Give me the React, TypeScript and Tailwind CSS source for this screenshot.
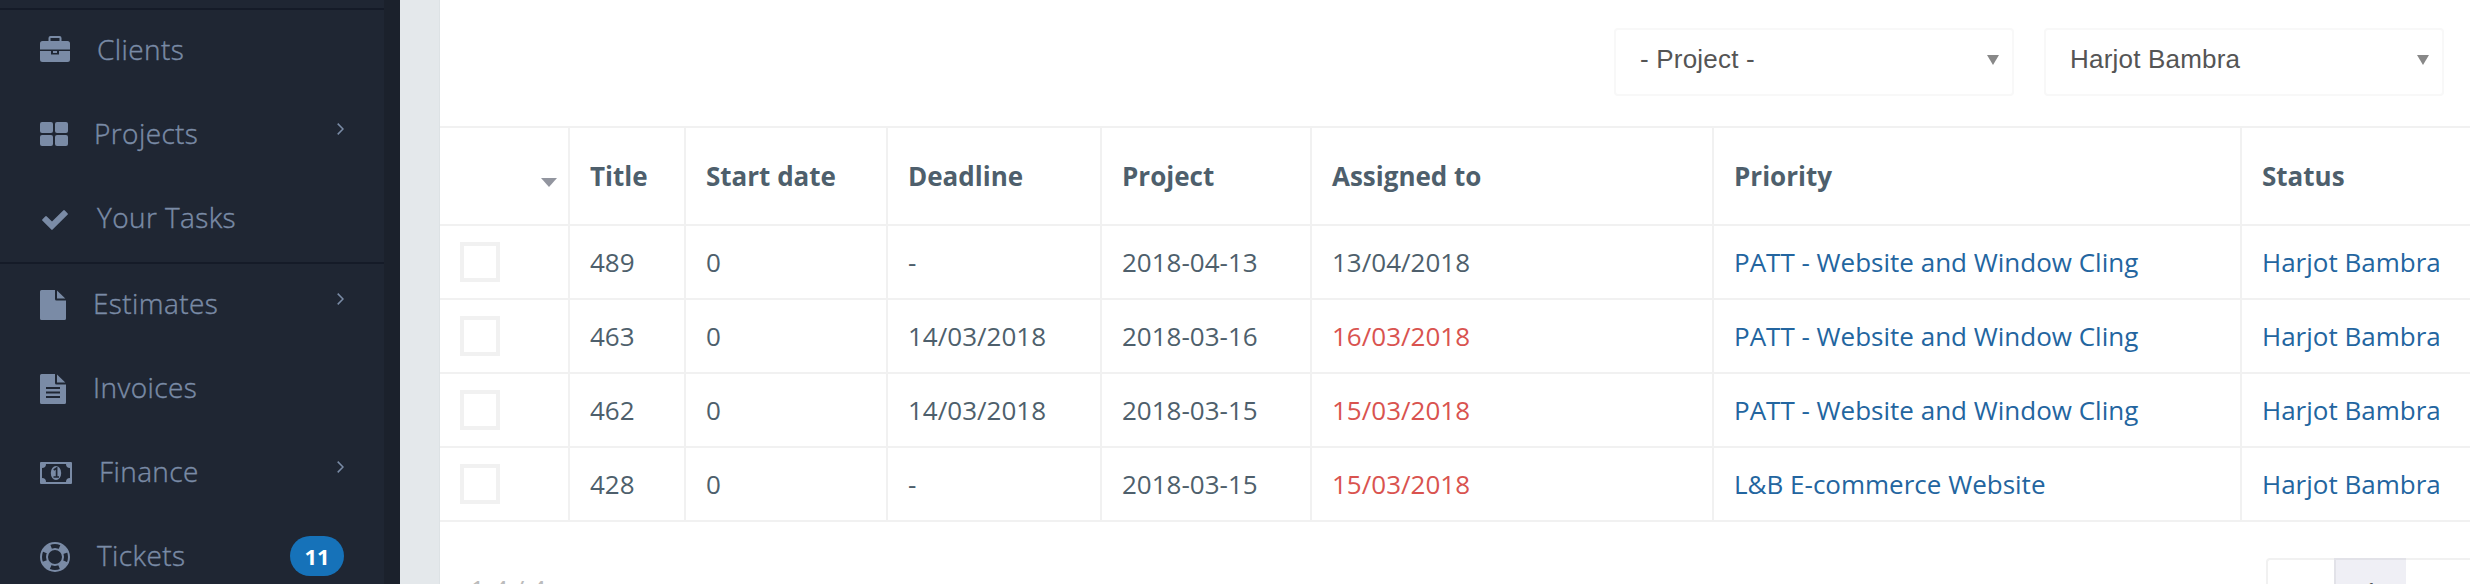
import React from "react";

const C = "#7a8ba6";

function Briefcase() {
  return (
    <svg width="30" height="26" viewBox="0 0 30 26" fill={C}>
      <path fillRule="evenodd" d="M8.500 5V2Q8.500 0 10.500 0H19.500Q21.500 0 21.500 2V5H27.500Q30 5 30 7.500V13.500H0V7.500Q0 5 2.500 5ZM10.500 5H19.500V2H10.500Z" />
      <path d="M0 15H11V18.500H19V15H30V23.500Q30 26 27.500 26H2.500Q0 26 0 23.500Z" />
      <rect x="13" y="15" width="4" height="2" />
    </svg>
  );
}
function Grid() {
  return (
    <svg className="mt-[2px]" width="28" height="24" viewBox="0 0 28 24" fill={C}>
      <rect width="13" height="11" rx="2" />
      <rect x="15" width="13" height="11" rx="2" />
      <rect y="13" width="13" height="11" rx="2" />
      <rect x="15" y="13" width="13" height="11" rx="2" />
    </svg>
  );
}
function Check() {
  return (
    <svg className="mt-[6px] ml-[2px]" width="26" height="20" viewBox="0 0 26 20" fill={C}>
      <path d="M10.600 19.600Q10 20.200 9.300 19.600L.5 10.800Q-.3 10 .5 9.200L3.200 6.500Q4 5.700 4.800 6.500L10 11.500L21.200.5Q22 -.3 22.800.5L25.500 3.200Q26.300 4 25.500 4.800Z" />
    </svg>
  );
}
function FileIcon({ lines }: { lines?: boolean }) {
  return (
    <svg className="mt-[4px]" width="26" height="30" viewBox="0 0 26 30" fill={C}>
      <path d="M15 0V9Q15 10.500 16.500 10.500H26V28.500Q26 30 24.500 30H1.500Q0 30 0 28.500V1.500Q0 0 1.500 0Z" />
      <path d="M17 .5L25.300 8.500H17Z" />
      {lines && <path d="M6 14H20M6 18.500H20M6 23H20" stroke="#1f2633" strokeWidth="1.800" />}
    </svg>
  );
}
function Money() {
  return (
    <svg className="mt-[4px]" width="32" height="22" viewBox="0 0 32 22" fill={C}>
      <path fillRule="evenodd" d="M0 1Q0 0 1 0H31Q32 0 32 1V21Q32 22 31 22H1Q0 22 0 21ZM6 2A4 4 0 0 1 2 6V16A4 4 0 0 1 6 20H26A4 4 0 0 1 30 16V6A4 4 0 0 1 26 2Z" />
      <ellipse cx="16" cy="11" rx="5.200" ry="7" />
      <path d="M13.700 8L16.600 6V15M13.500 15H19" fill="none" stroke="#1f2633" strokeWidth="1.700" />
    </svg>
  );
}
function Ring() {
  return (
    <svg className="mt-[4px]" width="30" height="30" viewBox="0 0 30 30" fill="none" stroke={C}>
      <circle cx="15" cy="15" r="14" strokeWidth="2" />
      <circle cx="15" cy="15" r="8" strokeWidth="2" />
      <circle cx="15" cy="15" r="11" strokeWidth="6" strokeDasharray="8.640 8.640" strokeDashoffset="-4.320" />
    </svg>
  );
}

function Item({ icon, label, gap, arrow, badge }: { icon: React.ReactNode; label: string; gap: string; arrow?: boolean; badge?: string }) {
  return (
    <div className="flex h-[84px] shrink-0 items-center pr-[40px] pb-[6px] pl-[40px]">
      <div className="flex h-[34px] items-center">{icon}</div>
      <span className={`${gap} text-[28px] leading-[40px] font-light tracking-[0.4px] [-webkit-text-stroke:0.4px_#7a8ba6]`}>{label}</span>
      {arrow && (
        <svg className="mb-[8px] ml-auto" width="7" height="12" viewBox="0 0 7 12" fill="none" stroke={C} strokeWidth="1.500">
          <path d="M.7.6L6 6L.7 11.400" />
        </svg>
      )}
      {badge && (
        <span className="mt-[2px] ml-auto flex h-[40px] w-[54px] items-center justify-center rounded-full bg-[#1672b9] text-[22px] font-bold text-white">{badge}</span>
      )}
    </div>
  );
}

const heads = ["Title", "Start date", "Deadline", "Project", "Assigned to", "Priority", "Status"];
const rows = [
  ["489", "0", "-", "2018-04-13", "13/04/2018", "PATT - Website and Window Cling", "Harjot Bambra"],
  ["463", "0", "14/03/2018", "2018-03-16", "16/03/2018", "PATT - Website and Window Cling", "Harjot Bambra"],
  ["462", "0", "14/03/2018", "2018-03-15", "15/03/2018", "PATT - Website and Window Cling", "Harjot Bambra"],
  ["428", "0", "-", "2018-03-15", "15/03/2018", "L&B E-commerce Website", "Harjot Bambra"],
];
const cols = "grid grid-cols-[130px_116px_202px_214px_210px_402px_528px_228px] border-b-2 border-[#f1f1f1]";
const cell = "flex items-center whitespace-nowrap border-[#f1f1f1] pl-[20px]";

function Select({ label }: { label: string }) {
  return (
    <div className="flex h-[68px] w-[400px] items-start justify-between rounded-[4px] border-2 border-[#f8f8f8] pt-[9px] pr-[13px] pl-[24px] font-['Liberation_Sans',sans-serif] text-[26px] leading-[40px] tracking-[0.2px] text-[#555]">
      <span>{label}</span>
      <svg className="mt-[16px]" width="12" height="10" viewBox="0 0 12 10" fill="#888"><path d="M0 0H12L6 10Z" /></svg>
    </div>
  );
}

export default function App() {
  return (
    <div className="flex h-[584px] w-[2470px] overflow-hidden bg-white font-['Open_Sans',sans-serif] text-[26px] text-[#4e5f6c]">
      <nav className="flex w-[400px] shrink-0 bg-[#1b212c]">
        <div className="flex w-[384px] flex-col bg-[#1f2633] text-[#7a8ba6]">
          <div className="h-[8px] shrink-0" />
          <div className="h-[2px] shrink-0 bg-[#151b28]" />
          <Item icon={<Briefcase />} label="Clients" gap="ml-[27px]" />
          <Item icon={<Grid />} label="Projects" gap="ml-[26px]" arrow />
          <Item icon={<Check />} label="Your Tasks" gap="ml-[29px]" />
          <div className="h-[2px] shrink-0 bg-[#151b28]" />
          <Item icon={<FileIcon />} label="Estimates" gap="ml-[27px]" arrow />
          <Item icon={<FileIcon lines />} label="Invoices" gap="ml-[27px]" />
          <Item icon={<Money />} label="Finance" gap="ml-[27px]" arrow />
          <Item icon={<Ring />} label="Tickets" gap="ml-[27px]" badge="11" />
        </div>
      </nav>
      <div className="w-[40px] shrink-0 border-r border-[#dde2e5] bg-[#e4e8eb]" />
      <main className="flex w-[2030px] shrink-0 flex-col">
        <div className="flex h-[126px] shrink-0 justify-end gap-[30px] pt-[28px] pr-[26px]">
          <Select label="- Project -" />
          <Select label="Harjot Bambra" />
        </div>
        <div className={`${cols} h-[100px] shrink-0 border-t-2 font-bold`}>
          <div className="flex items-center justify-end border-r-2 border-[#f1f1f1] pt-[13px] pr-[11px]">
            <svg width="16" height="9" viewBox="0 0 16 9" fill="#92959f"><path d="M0 0H16L8 9Z" /></svg>
          </div>
          {heads.map((h, i) => (
            <div key={h} className={`${cell} ${i < 6 ? "border-r-2" : ""}`}>{h}</div>
          ))}
        </div>
        {rows.map((r, n) => (
          <div key={r[0]} className={`${cols} h-[74px] shrink-0`}>
            <div className="flex items-center border-r-2 border-[#f1f1f1] pl-[20px]">
              <div className="size-[40px] border-4 border-[#f1f1f1]" />
            </div>
            {r.map((t, i) => (
              <div key={i} className={`${cell} ${i < 6 ? "border-r-2" : ""} ${i > 4 ? "text-[#23659f]" : i === 4 && n > 0 ? "text-[#d9534f]" : ""}`}>{t}</div>
            ))}
          </div>
        ))}
        <div className="flex h-[62px] shrink-0 justify-between overflow-hidden">
          <span className="mt-[51px] ml-[30px] text-[26px] leading-[32px] text-[#bbb]">1-4 / 4</span>
          <div className="mt-[36px] flex h-[60px]">
            <div className="w-[68px] rounded-tl-[4px] border-t-2 border-l-2 border-[#f1f1f1]" />
            <div className="flex w-[72px] justify-center border-t-2 border-l-2 border-[#e2e2e8] bg-[#efeff5] pt-[15px] text-[26px] leading-[32px] text-[#555]">1</div>
            <div className="w-[64px] border-t-2 border-[#f1f1f1]" />
          </div>
        </div>
      </main>
    </div>
  );
}
